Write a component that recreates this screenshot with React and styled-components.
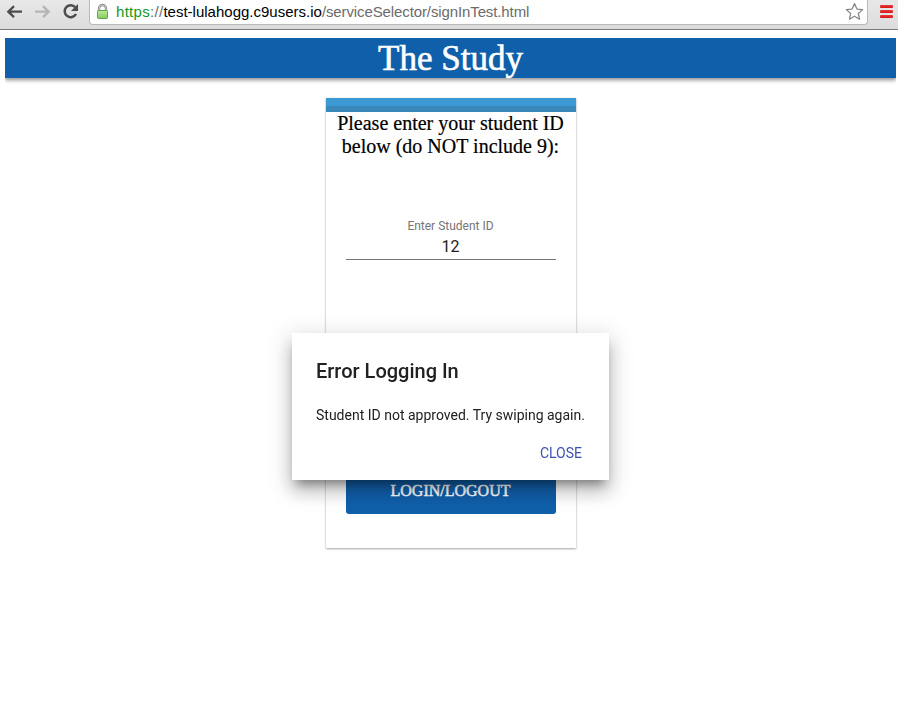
import React from "react";
import styled, { createGlobalStyle } from "styled-components";

const GlobalStyle = createGlobalStyle`
  * { box-sizing: border-box; }
  body { margin: 0; background: #fff; overflow: hidden; font-family: "Liberation Serif", serif; }
`;

const Page = styled.div`
  height: 717px;
  display: flex;
  flex-direction: column;
`;

const BrowserBar = styled.div`
  height: 30px;
  flex: none;
  display: flex;
  background: linear-gradient(#e8e8e8, #dcdcdc);
  border-bottom: 1px solid #7c7c7c;
`;

const NavIcons = styled.div`
  width: 89px;
  flex: none;
  svg { display: block; }
`;

const AddressBar = styled.div`
  width: 779px;
  height: 25px;
  flex: none;
  display: flex;
  background: #fff;
  border: 1px solid #b9b9b9;
  border-top: 0;
  border-radius: 0 0 4px 4px;
`;

const LockSlot = styled.div`
  width: 26px;
  flex: none;
`;

const Url = styled.div`
  flex: 1;
  white-space: nowrap;
  font: 15px/24px "Liberation Sans", sans-serif;
  letter-spacing: -0.11px;
  color: #6b6b6b;
`;

const Protocol = styled.span`
  letter-spacing: 0.3px;
`;

const Scheme = styled.span`
  color: #149b1c;
`;

const Host = styled.span`
  letter-spacing: 0;
  color: #000;
`;

const StarSlot = styled.div`
  width: 24px;
  flex: none;
`;

const MenuButton = styled.div`
  display: flex;
  flex-direction: column;
  gap: 2px;
  padding: 5px 0 0 12px;
`;

const MenuLine = styled.div`
  width: 13px;
  height: 3px;
  border-radius: 1px;
  background: linear-gradient(#f03a3a, #cf1616);
`;

const Header = styled.header`
  height: 40px;
  flex: none;
  margin: 8px 2px 0 5px;
  padding-top: 1px;
  background: #105faa;
  color: #fff;
  text-align: center;
  font-size: 35px;
  line-height: 40px;
  -webkit-text-stroke: 0.6px #fff;
  box-shadow: 0 2px 3px rgba(0, 0, 0, 0.25), 0 3px 4px rgba(0, 0, 0, 0.18);
  clip-path: inset(0 0 -8px 0);
`;

const Card = styled.main`
  width: 250px;
  height: 450px;
  flex: none;
  margin: 20px 0 0 326px;
  display: flex;
  flex-direction: column;
  background: #fff;
  box-shadow: 0 1px 2px rgba(0, 0, 0, 0.35), 0 0 2px rgba(0, 0, 0, 0.06);
`;

const Stripe = styled.div`
  height: 14px;
  flex: none;
  background: #3b99d4;
  border-bottom: 6px solid #3a87b9;
`;

const Prompt = styled.p`
  margin: 0;
  padding-right: 1px;
  height: 105px;
  color: #000;
  text-align: center;
  font-size: 20px;
  line-height: 23px;
  -webkit-text-stroke: 0.2px #000;
`;

const Field = styled.label`
  display: block;
  height: 43px;
  margin: 0 20px;
  padding-right: 1px;
  border-bottom: 1px solid #757575;
  text-align: center;
  font-family: Roboto, sans-serif;
`;

const FieldLabel = styled.span`
  display: block;
  font-size: 12px;
  line-height: 18px;
  color: #757575;
`;

const FieldValue = styled.span`
  display: block;
  font-size: 16px;
  line-height: 23px;
  color: #212121;
`;

const LoginButton = styled.button`
  margin: auto 20px 34px;
  height: 46px;
  padding: 0 1px 0 0;
  border: 0;
  border-radius: 3px;
  background: #105faa;
  color: #fff;
  font: 16px/46px "Liberation Serif", serif;
  -webkit-text-stroke: 0.5px #fff;
`;

const Dialog = styled.section`
  position: fixed;
  left: 292px;
  top: 333px;
  width: 317px;
  height: 147px;
  padding: 24px;
  display: flex;
  flex-direction: column;
  background: #fff;
  color: #212121;
  font-family: Roboto, sans-serif;
  box-shadow: 0 12px 16px 1px rgba(0, 0, 0, 0.14), 0 6px 22px 4px rgba(0, 0, 0, 0.14),
    0 8px 10px -5px rgba(0, 0, 0, 0.4);
`;

const DialogTitle = styled.h2`
  margin: 0 0 20px;
  font-size: 20px;
  font-weight: 500;
  line-height: 28px;
`;

const DialogText = styled.p`
  margin: 0;
  white-space: nowrap;
  font-size: 14px;
  line-height: 20px;
`;

const DialogClose = styled.button`
  margin: 18px 3px 0 auto;
  padding: 0;
  border: 0;
  background: none;
  color: #3f51b5;
  font: 14px/20px Roboto, sans-serif;
`;

export default function App() {
  return (
    <Page>
      <GlobalStyle />
      <BrowserBar>
        <NavIcons>
          <svg width="89" height="29" fill="none">
            <g strokeWidth="2.3">
              <path d="M22 11.7H9M14 6.2L8.3 11.7L14 17.2" stroke="#4d4d4d" />
              <path d="M35 11.7H48M43 6.2L48.7 11.7L43 17.2" stroke="#b5b5b5" />
              <path d="M75.3 7.3A6 6 0 1 0 76 14" stroke="#4d4d4d" strokeWidth="2.5" />
            </g>
            <path d="M78 4V11H71Z" fill="#4d4d4d" />
          </svg>
        </NavIcons>
        <AddressBar>
          <LockSlot>
            <svg width="26" height="24" fill="none">
              <defs>
                <linearGradient id="lockBody" x1="0" y1="0" x2="0" y2="1">
                  <stop stopColor="#bdea9c" />
                  <stop offset="1" stopColor="#82cb5c" />
                </linearGradient>
              </defs>
              <path d="M9 11V8.5a3.5 3.5 0 0 1 7 0V11" stroke="#8a8a8a" strokeWidth="2.4" />
              <path d="M9 11V8.5a3.5 3.5 0 0 1 7 0V11" stroke="#d8d8d8" strokeWidth="0.8" />
              <rect x="7.5" y="10.5" width="10" height="8" rx="0.8" fill="url(#lockBody)" stroke="#62a448" />
            </svg>
          </LockSlot>
          <Url>
            <Protocol>
              <Scheme>https</Scheme>://
            </Protocol>
            <Host>test-lulahogg.c9users.io</Host>/serviceSelector/signInTest.html
          </Url>
          <StarSlot>
            <svg width="24" height="24" fill="none">
              <path
                d="M11.5 3.6L13.9 9.1L19.7 9.6L15.3 13.5L16.6 19.3L11.5 16.3L6.4 19.3L7.7 13.5L3.3 9.6L9.1 9.1Z"
                stroke="#858585"
                strokeWidth="1.2"
                strokeLinejoin="round"
              />
            </svg>
          </StarSlot>
        </AddressBar>
        <MenuButton>
          <MenuLine />
          <MenuLine />
          <MenuLine />
        </MenuButton>
      </BrowserBar>
      <Header>The Study</Header>
      <Card>
        <Stripe />
        <Prompt>
          Please enter your student ID
          <br />
          below (do NOT include 9):
        </Prompt>
        <Field>
          <FieldLabel>Enter Student ID</FieldLabel>
          <FieldValue>12</FieldValue>
        </Field>
        <LoginButton>LOGIN/LOGOUT</LoginButton>
      </Card>
      <Dialog role="dialog">
        <DialogTitle>Error Logging In</DialogTitle>
        <DialogText>Student ID not approved. Try swiping again.</DialogText>
        <DialogClose>CLOSE</DialogClose>
      </Dialog>
    </Page>
  );
}
